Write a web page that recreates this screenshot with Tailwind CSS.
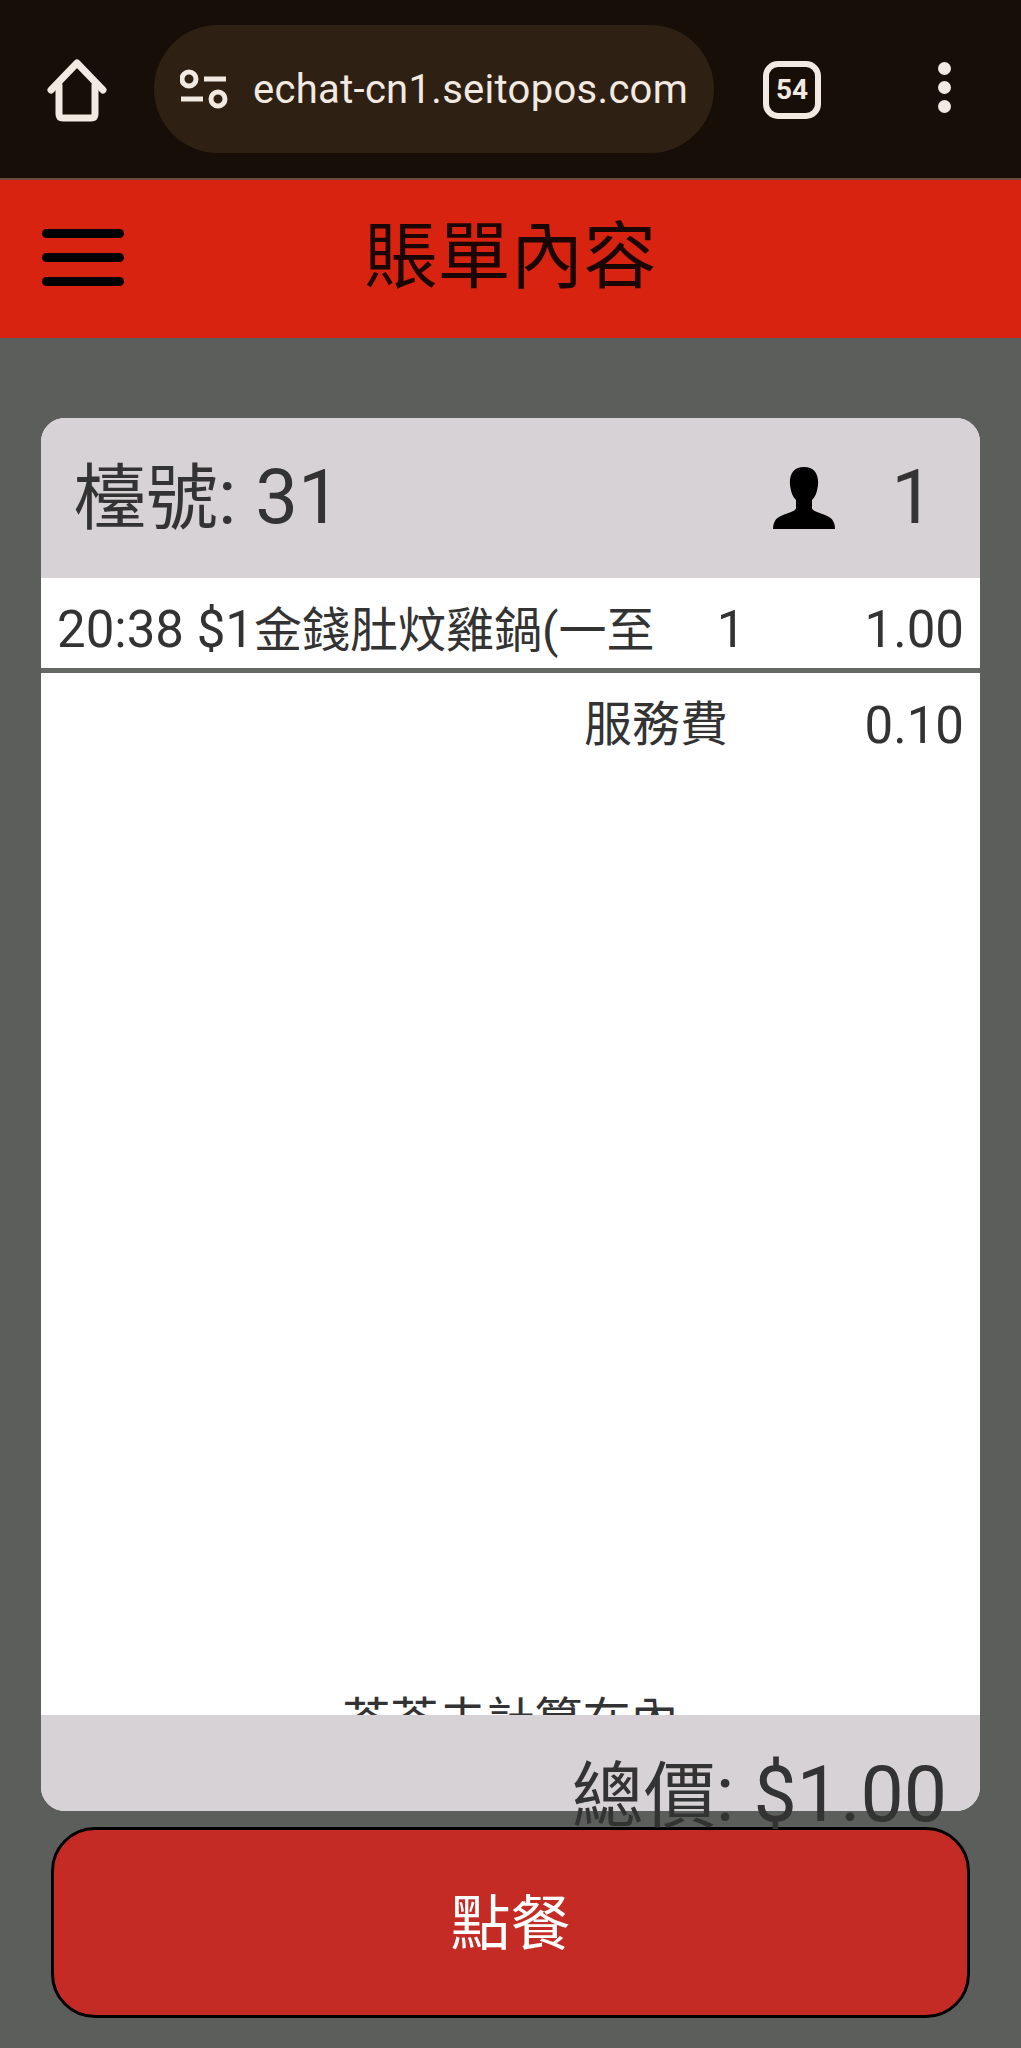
<!doctype html>
<html lang="zh-Hant">
<head>
<meta charset="utf-8">
<script src="https://cdn.jsdelivr.net/npm/@tailwindcss/browser@4"></script>
</head>
<body class="m-0 bg-[#5c5e5c] font-[Roboto,'Noto_Sans_CJK_TC',sans-serif]">
<div class="w-[1021px] h-[2048px] overflow-hidden flex flex-col bg-[#5c5e5c]">
  <!-- browser bar -->
  <div class="h-[178px] shrink-0 bg-[#170e07] flex items-start pt-[25px] pl-[44px] text-[#f2e9e1]">
    <svg class="w-[66px] h-[66px] mt-[33px] shrink-0" viewBox="0 0 66 66" fill="none" stroke="#f2e9e1" stroke-width="7" stroke-linecap="round" stroke-linejoin="round">
      <path d="M7 32 L33 5 L59 32"/><path d="M15 27 V56 Q15 60 19 60 H47 Q51 60 51 56 V27"/>
    </svg>
    <div class="ml-[44px] w-[560px] h-[128px] rounded-[64px] bg-[#2f2014] flex items-center pl-[26px] shrink-0">
      <svg class="w-[50px] h-[40px] shrink-0" viewBox="0 0 50 40" fill="none" stroke="#f2e9e1" stroke-width="5">
        <circle cx="9" cy="10" r="7"/><path d="M24 10H46"/><path d="M1 30H23"/><circle cx="38" cy="30" r="7"/>
      </svg>
      <span class="ml-[23px] text-[40px] leading-none tracking-[0.3px] whitespace-nowrap pt-[2px]">echat-cn1.seitopos.com</span>
    </div>
    <div class="ml-[49px] mt-[36px] w-[58px] h-[58px] shrink-0 rounded-[15px] border-[6px] border-[#f2e9e1] flex items-center justify-center text-[28px] leading-none font-bold">54</div>
    <div class="ml-[117px] mt-[37px] flex flex-col gap-[6px] shrink-0">
      <div class="w-[13px] h-[13px] rounded-full bg-[#f2e9e1]"></div>
      <div class="w-[13px] h-[13px] rounded-full bg-[#f2e9e1]"></div>
      <div class="w-[13px] h-[13px] rounded-full bg-[#f2e9e1]"></div>
    </div>
  </div>
  <!-- app header -->
  <div class="relative h-[160px] shrink-0 bg-[#d7230f] border-t-2 border-[#6d4a40] flex items-center justify-center">
    <div class="absolute left-[42px] top-[49px] w-[82px] flex flex-col gap-[15px]">
      <div class="h-[9px] rounded-full bg-black"></div>
      <div class="h-[9px] rounded-full bg-black"></div>
      <div class="h-[9px] rounded-full bg-black"></div>
    </div>
    <h1 class="text-[73px] leading-none font-normal text-[#1a0503] mb-[4px]">賬單內容</h1>
  </div>
  <!-- card -->
  <div class="ml-[41px] mt-[80px] w-[939px] h-[1393px] shrink-0 rounded-[24px] overflow-hidden flex flex-col bg-white text-[#333]">
    <div class="h-[160px] shrink-0 bg-[#d6d2d5] flex items-center pl-[33px] pr-[46px]">
      <span class="text-[72px] leading-none mb-[2px]">檯號<span class="text-[76px]">: 31</span></span>
      <svg class="ml-auto w-[62px] h-[62px] shrink-0" viewBox="0 0 62 62" fill="#000">
        <path d="M31 0C21 0 16 7 17 18C18 26 20 30 23 33V41C23 45 12 46 6 50C2 52 0 57 0 62H62C62 57 60 52 56 50C50 46 39 45 39 41V33C42 30 44 26 45 18C46 7 41 0 31 0Z"/>
      </svg>
      <span class="ml-[56px] text-[76px] leading-none mb-[2px]">1</span>
    </div>
    <div class="flex-1 min-h-0 relative overflow-hidden">
      <div class="h-[90px] flex items-center pl-[16px] pr-[16px] pt-[12px] text-[48px] leading-none">
        <span class="w-[639px] whitespace-nowrap shrink-0"><span class="text-[51px]">20:38 $1</span>金錢肚炆雞鍋(一至</span>
        <span class="w-[70px] text-center shrink-0 text-[51px]">1</span>
        <span class="flex-1 text-right text-[51px]">1.00</span>
      </div>
      <div class="h-[5px] bg-[#666866]"></div>
      <div class="h-[90px] flex items-center justify-end pl-[16px] pr-[16px] pt-[14px] text-[48px] leading-none">
        <span>服務費</span>
        <span class="w-[236px] shrink-0 text-right text-[51px]">0.10</span>
      </div>
      <div class="absolute left-0 right-0 top-[1119px] text-center text-[48px] leading-none">茶芥未計算在內</div>
    </div>
    <div class="h-[96px] shrink-0 bg-[#d6d2d5]"></div>
  </div>
  <!-- total overlay -->
  <div class="relative h-0 shrink-0">
    <div class="absolute right-[74px] top-[-54px] text-[72px] leading-none text-[#333] whitespace-nowrap">總價<span class="text-[77px]">: $1.00</span></div>
  </div>
  <!-- button -->
  <div class="ml-[51px] mt-[16px] w-[919px] h-[191px] shrink-0 rounded-[44px] bg-[#c42b25] border-[3px] border-black flex items-center justify-center pt-[4px] text-[60px] leading-none text-white">點餐</div>
</div>
</body>
</html>
